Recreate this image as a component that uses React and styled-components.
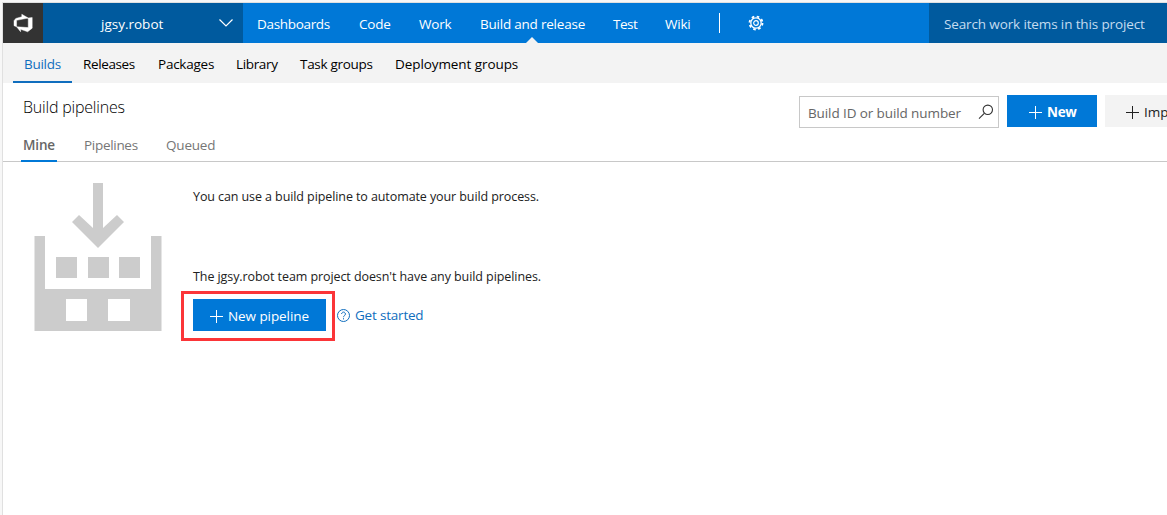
import React from "react";
import styled, { createGlobalStyle } from "styled-components";

const Global = createGlobalStyle`
  * { box-sizing: border-box; }
  html, body { margin: 0; background: #fff; overflow: hidden; }
  body { font-family: "Open Sans", "Noto Sans", sans-serif; font-size: 13.5px; color: #212121; }
`;

const Page = styled.div`
  width: 1167px;
  height: 515px;
  padding: 2px 0 0 2px;
  background: #f7f7f7;
  overflow: hidden;
`;
const Shell = styled.div`
  height: 513px;
  background: #fff;
  border-left: 1px solid #e0e0e0;
  border-top: 1px solid #e0e0e0;
`;
const Label = styled.span`
  display: block;
  flex: none;
  width: ${(p) => p.$w}px;
  letter-spacing: ${(p) => p.$ls || 0}px;
  white-space: nowrap;
`;
const TopBar = styled.header`
  display: flex;
  height: 40px;
  background: #0078d7;
  color: #fff;
`;
const Logo = styled.div`
  width: 40px;
  height: 40px;
  background: #333;
`;
const ProjectPicker = styled.div`
  display: flex;
  align-items: center;
  width: 200px;
  padding: 2px 0 0 58px;
  background: #005a9e;
  svg { margin: -3px 0 0 55px; }
`;
const MainNav = styled.nav`
  display: flex;
  flex: none;
  gap: 28px;
  width: 476px;
  padding-left: 14px;
`;
const NavItem = styled.a`
  position: relative;
  padding-top: 2px;
  line-height: 38px;
`;
const Notch = styled.i`
  position: absolute;
  left: 46px;
  bottom: 0;
  border: 6px solid transparent;
  border-top: 0;
  border-bottom-color: #f3f3f3;
`;
const Settings = styled.div`
  display: flex;
  align-items: center;
  width: 210px;
  height: 20px;
  margin-top: 10px;
  padding-left: 28px;
  border-left: 1px solid #fff;
`;
const HeaderSearch = styled.div`
  flex: 1;
  padding: 2px 0 0 15px;
  line-height: 38px;
  background: #005a9e;
  color: #c4dcf0;
`;
const SubNav = styled.nav`
  display: flex;
  height: 40px;
  gap: 22px;
  padding-left: 10px;
  background: #f3f3f3;
  color: #000;
  line-height: 42px;
`;
const SubItem = styled.a`
  height: 40px;
  ${(p) => p.$active && "color: #106ebe; border-bottom: 2px solid #106ebe; padding: 0 11px; margin-right: -11px;"}
`;
const Heading = styled.div`
  display: flex;
  justify-content: space-between;
  height: 48px;
  padding-left: 20px;
`;
const Title = styled.h1`
  margin: 10px 0 0;
  font-size: 16px;
  font-weight: 300;
  line-height: 28px;
  color: #000;
`;
const Tools = styled.div`
  display: flex;
  width: 368px;
  padding-top: 12px;
`;
const FilterBox = styled.div`
  display: flex;
  flex: none;
  align-items: center;
  width: 200px;
  height: 32px;
  margin: 1px 8px 0 0;
  padding: 2px 0 0 8px;
  border: 1px solid #c8c8c8;
  color: #666;
  svg { margin: -2px 0 0 17px; }
`;
const Button = styled.button`
  display: flex;
  flex: none;
  align-items: center;
  gap: 5px;
  width: ${(p) => p.$w}px;
  height: 32px;
  margin: 0 8px 0 0;
  padding: ${(p) => p.$pad || "2px 0 0 21px"};
  border: 0;
  font: ${(p) => p.$weight || 500} 13.5px "Open Sans", sans-serif;
  text-align: left;
  overflow: hidden;
  background: ${(p) => (p.$plain ? "#f3f3f3" : "#0078d7")};
  color: ${(p) => (p.$plain ? "#212121" : "#fff")};
`;
const Tabs = styled.div`
  display: flex;
  height: 31px;
  gap: 28px;
  padding-left: 18px;
  border-bottom: 1px solid #c8c8c8;
  color: #767676;
  line-height: 29px;
`;
const Tab = styled.a`
  height: 31px;
  ${(p) => p.$active && "font-weight: 600; color: #666; width: 36px; padding-left: 2px; margin-right: -1px; border-bottom: 2px solid #0078d7;"}
`;
const Empty = styled.main`
  display: flex;
  padding: 21px 0 0 31px;
  font-size: 12.5px;
`;
const Message = styled.section`
  display: flex;
  flex-direction: column;
  padding-left: 31px;
`;
const Line = styled.div`
  height: 80px;
  padding-top: 4px;
  line-height: 20px;
`;
const Actions = styled.div`
  display: flex;
  margin: -52px 0 0 -12px;
`;
const Highlight = styled.div`
  width: 154px;
  height: 50px;
  padding: 5px 6px 5px 9px;
  border: 3px solid #fb3538;
`;
const HelpLink = styled.a`
  display: flex;
  align-items: center;
  gap: 5px;
  height: 48px;
  margin-left: 2px;
  font-size: 13.5px;
  color: #106ebe;
`;

const Plus = ({ color = "#fff" }) => (
  <svg width="14" height="14" viewBox="0 0 14 14" stroke={color} fill="none">
    <path d="M7.500 1v13M1 7.500h13" />
  </svg>
);

const nav = [
  ["Dashboards", 74, -0.32], ["Code", 32, -0.2], ["Work", 33, -0.2],
  ["Build and release", 105, -0.22], ["Test", 24, -0.5], ["Wiki", 26, -0.2],
];
const sub = [
  ["Builds", 37, -0.27], ["Releases", 53, -0.37], ["Packages", 56, -0.24],
  ["Library", 42, -0.34], ["Task groups", 73, -0.29], ["Deployment groups", 124, -0.08],
];

export default function App() {
  return (
    <Page>
      <Global />
      <Shell>
        <TopBar>
          <Logo>
            <svg width="40" height="40" viewBox="0 0 40 40">
              <path fill="#fff" stroke="#fff" strokeWidth="0.350" transform="translate(9.700 10) scale(1.300 1.250)" d="M15 3.622v8.512L11.500 15l-5.425-1.975v1.958L3.004 10.970l8.951.7V4.005L15 3.622zm-2.984.428L6.994 1v2.001L2.382 4.356 1 6.130v4.029l1.978.873V5.869l9.038-1.818z" />
            </svg>
          </Logo>
          <ProjectPicker>
            <Label $w={62}>jgsy.robot</Label>
            <svg width="16" height="10" viewBox="0 0 16 10" fill="none" stroke="#fff" strokeWidth="1.2"><path d="M1.500 1.500L8 8l6.500-6.500" /></svg>
          </ProjectPicker>
          <MainNav>
            {nav.map(([t, w, ls]) => (
              <NavItem key={t}><Label $w={w} $ls={ls}>{t}</Label>{t.startsWith("Build") && <Notch />}</NavItem>
            ))}
          </MainNav>
          <Settings>
            <svg width="16" height="16" viewBox="0 0 16 16" fill="none" stroke="#fff">
              <circle cx="8" cy="8" r="5.200" strokeWidth="1.300" />
              <circle cx="8" cy="8" r="2.300" strokeWidth="1.200" />
              <circle cx="8" cy="8" r="6.500" strokeWidth="1.800" strokeDasharray="2.550 2.550" />
            </svg>
          </Settings>
          <HeaderSearch><Label $w={201} $ls={-0.13}>Search work items in this project</Label></HeaderSearch>
        </TopBar>
        <SubNav>
          {sub.map(([t, w, ls], i) => (
            <SubItem key={t} $active={i === 0}><Label $w={w} $ls={ls}>{t}</Label></SubItem>
          ))}
        </SubNav>
        <Heading>
          <Title><Label $w={102} $ls={-0.2}>Build pipelines</Label></Title>
          <Tools>
            <FilterBox>
              <Label $w={153} $ls={-0.1}>Build ID or build number</Label>
              <svg width="16" height="16" viewBox="0 0 16 16" fill="none" stroke="#333" strokeWidth="1.100"><circle cx="9.800" cy="5.800" r="4.700" /><path d="M6.300 9.300L1 14.600" /></svg>
            </FilterBox>
            <Button $w={90} $weight={700}><Plus /><Label $w={30} $ls={-0.3}>New</Label></Button>
            <Button $w={90} $plain $pad="2px 0 0 20px"><Plus color="#212121" /><Label $w={45}>Import</Label></Button>
          </Tools>
        </Heading>
        <Tabs>
          <Tab $active><Label $w={32} $ls={-0.15}>Mine</Label></Tab>
          <Tab><Label $w={54} $ls={-0.3}>Pipelines</Label></Tab>
          <Tab><Label $w={50} $ls={-0.2}>Queued</Label></Tab>
        </Tabs>
        <Empty>
          <svg width="128" height="149" viewBox="0 0 128 149" fill="#ccc">
            <path d="M59 0h10v45l14-13 7 7-26 26-26-26 7-7 14 13z" />
            <path d="M22 74h21v21H22zM54 74h21v21H54zM85 74h21v21H85z" />
            <path fillRule="evenodd" d="M.500 53h10.500v53h106V53h10.500v95H.500zM32 116v22h21v-22zM74 116v22h22v-22z" />
          </svg>
          <Message>
            <Line><Label $w={347} $ls={-0.09}>You can use a build pipeline to automate your build process.</Label></Line>
            <Line><Label $w={349} $ls={-0.08}>The jgsy.robot team project doesn't have any build pipelines.</Label></Line>
            <Actions>
              <Highlight><Button $w={133} $pad="2px 0 0 16px"><Plus /><Label $w={82} $ls={-0.08}>New pipeline</Label></Button></Highlight>
              <HelpLink>
                <svg width="13" height="13" viewBox="0 0 13 13" fill="none" stroke="#106ebe"><circle cx="6.500" cy="6.500" r="6" /><path d="M4.600 5a1.900 1.900 0 1 1 2.900 1.600q-1 .6-1 1.600M6.500 9.200v1.200" /></svg>
                <Label $w={68} $ls={-0.2}>Get started</Label>
              </HelpLink>
            </Actions>
          </Message>
        </Empty>
      </Shell>
    </Page>
  );
}
